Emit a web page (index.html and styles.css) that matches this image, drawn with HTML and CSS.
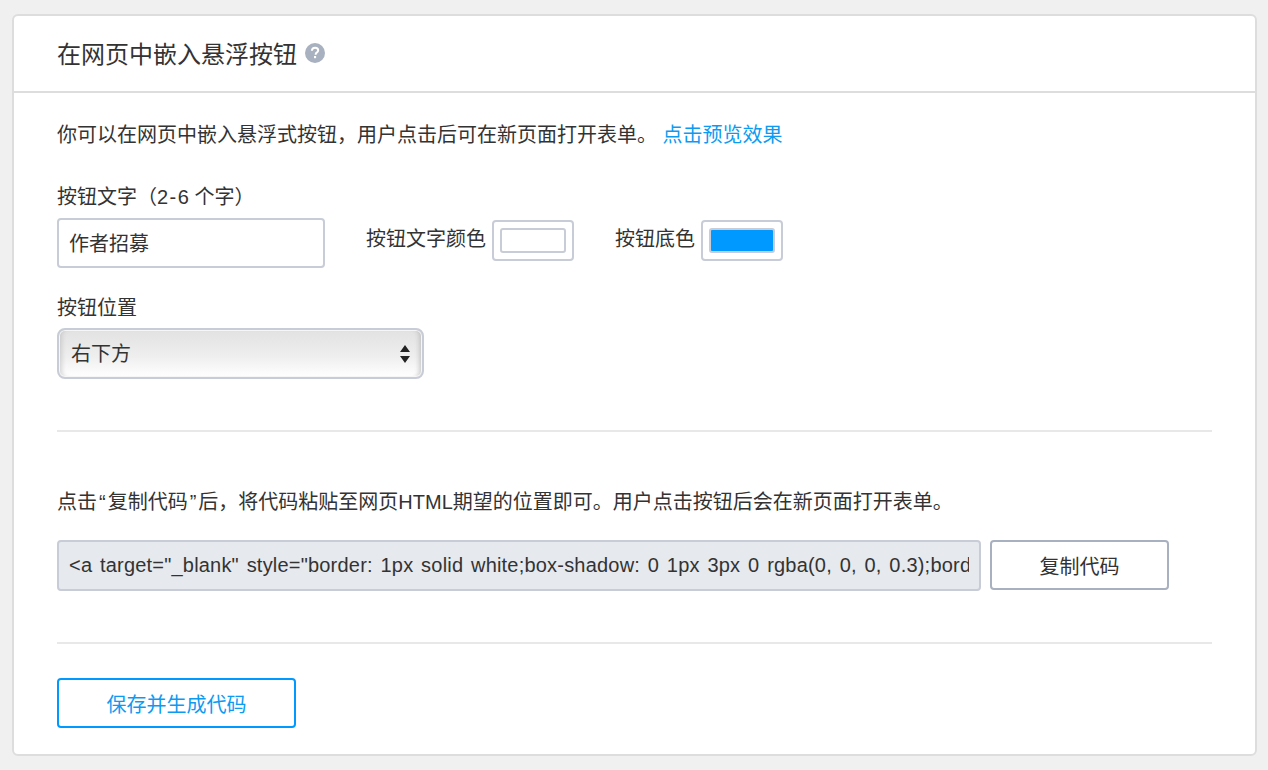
FILE: index.html
```html
<!DOCTYPE html>
<html lang="zh-CN">
<head>
<meta charset="utf-8">
<title>在网页中嵌入悬浮按钮</title>
<link rel="stylesheet" href="styles.css">
</head>
<body>
<main class="card">
  <header class="card-head">
    <h1 class="title">在网页中嵌入悬浮按钮</h1>
    <svg class="help" width="20" height="20" viewBox="0 0 20 20" aria-hidden="true"><circle cx="10" cy="10" r="10" fill="#a8b1c0"/><path d="M6.9 7.8c.1-2 1.4-3.1 3.2-3.1 1.9 0 3.1 1.1 3.1 2.6 0 1.2-.6 1.8-1.5 2.4-.8.5-1 .8-1 1.6v.4" fill="none" stroke="#fff" stroke-width="2"/><rect x="9" y="13" width="2.1" height="2.2" fill="#fff"/></svg>
  </header>
  <section class="section section-top">
    <p class="intro">你可以在网页中嵌入悬浮式按钮&#xFF0C;用户点击后可在新页面打开表单。 <a class="link" href="#">点击预览效果</a></p>
    <div class="label label-text">按钮文字&#xFF08;<span class="range">2-6</span>个字&#xFF09;</div>
    <div class="row">
      <input class="text-input" type="text" value="作者招募">
      <span class="inline-label first">按钮文字颜色</span>
      <span class="swatch"><span class="swatch-in white"></span></span>
      <span class="inline-label second">按钮底色</span>
      <span class="swatch"><span class="swatch-in blue"></span></span>
    </div>
    <div class="label label-pos">按钮位置</div>
    <div class="select">
      <span>右下方</span>
      <svg width="10" height="20" viewBox="0 0 10 20" aria-hidden="true"><path d="M5 1l5 7H0zM5 19L0 12h10z" fill="#222"/></svg>
    </div>
  </section>
  <section class="section section-code">
    <p class="hint">点击<span class="quote">“</span>复制代码<span class="quote">”</span>后&#xFF0C;将代码粘贴至网页HTML期望的位置即可。用户点击按钮后会在新页面打开表单。</p>
    <div class="code-row">
      <input class="code" type="text" readonly value='&lt;a target="_blank" style="border: 1px solid white;box-shadow: 0 1px 3px 0 rgba(0, 0, 0, 0.3);border-radius: 4px;'>
      <button class="copy" type="button">复制代码</button>
    </div>
  </section>
  <section class="section-save">
    <button class="save" type="button">保存并生成代码</button>
  </section>
</main>
</body>
</html>
```
FILE: styles.css
```css
* { box-sizing: border-box; }
html, body { margin: 0; height: 100%; }
body {
  background: #f0f0f0;
  padding: 14px 11px 14px 12px;
  font-family: "Liberation Sans", "Noto Sans CJK SC", sans-serif;
  font-size: 20px;
  color: #333;
  overflow: hidden;
}
.card {
  height: 742px;
  background: #fff;
  border: 2px solid #ddd;
  border-radius: 6px;
}
.card-head {
  height: 77px;
  border-bottom: 2px solid #ddd;
  padding: 2px 43px 0;
  display: flex;
  align-items: center;
  gap: 8px;
}
.title { margin: 0; font-size: 24px; font-weight: 400; line-height: 32px; }
.help { display: block; margin-top: -3px; }
.section { margin: 0 43px; border-bottom: 2px solid #e8e8e8; }
.section-top { height: 339px; padding-top: 27px; }
.intro { margin: 0; line-height: 30px; height: 30px; }
.link { color: #0d9bf2; text-decoration: none; }
.label { line-height: 28px; }
.label-text { margin-top: 33px; }
.label-pos { margin-top: 24px; }
.range { letter-spacing: 1.5px; margin-right: 4px; }
.row { display: flex; align-items: flex-start; margin-top: 7px; height: 52px; }
.text-input {
  width: 268px; height: 50px;
  border: 2px solid #c8ccd6; border-radius: 4px;
  padding: 0 10px 2px;
  font: inherit; color: #333; background: #fff; outline: none;
}
.inline-label { line-height: 28px; margin-top: 7px; }
.inline-label.first { margin-left: 41px; margin-right: 6px; }
.inline-label.second { margin-left: 41px; margin-right: 6px; }
.swatch {
  width: 82px; height: 41px; margin-top: 2px;
  border: 2px solid #c8ccd6; border-radius: 4px;
  padding: 6px;
  display: block;
}
.swatch-in { display: block; height: 25px; border: 2px solid #c8ccd6; border-radius: 3px; }
.swatch-in.white { background: #fff; }
.swatch-in.blue { background: #0099ff; }
.select {
  width: 367px; height: 51px; margin-top: 6px;
  border: 2px solid #c8ccd6; border-radius: 8px;
  padding: 0 12px;
  display: flex; align-items: center; justify-content: space-between;
  background: linear-gradient(#e2e2e2, #eeeeee 55%, #fff);
  box-shadow: inset 0 0 0 1px #f6f6f6, inset 6px 0 4px -3px rgba(170,170,170,.45), inset -6px 0 4px -3px rgba(170,170,170,.55);
  line-height: 28px;
}
.section-code { height: 212px; padding-top: 55px; }
.hint { margin: 0; line-height: 30px; height: 30px; }
.quote { padding: 0 2px; }
.code-row { display: flex; gap: 9px; margin-top: 23px; }
.code {
  width: 924px; height: 51px;
  background: #e6e9ee;
  border: 2px solid #c8ccd6; border-radius: 4px;
  padding: 0 10px;
  font: inherit; letter-spacing: .2px; word-spacing: 2px; color: #333; outline: none;
}
.copy {
  width: 179px; height: 50px;
  background: #fff;
  border: 2px solid #a8b1c0; border-radius: 4px;
  font: inherit; color: #333;
}
.section-save { padding: 34px 43px 0; }
.save {
  width: 239px; height: 50px;
  background: #fff;
  border: 2px solid #0099ff; border-radius: 4px;
  font: inherit; color: #0d9bf2;
}
```
